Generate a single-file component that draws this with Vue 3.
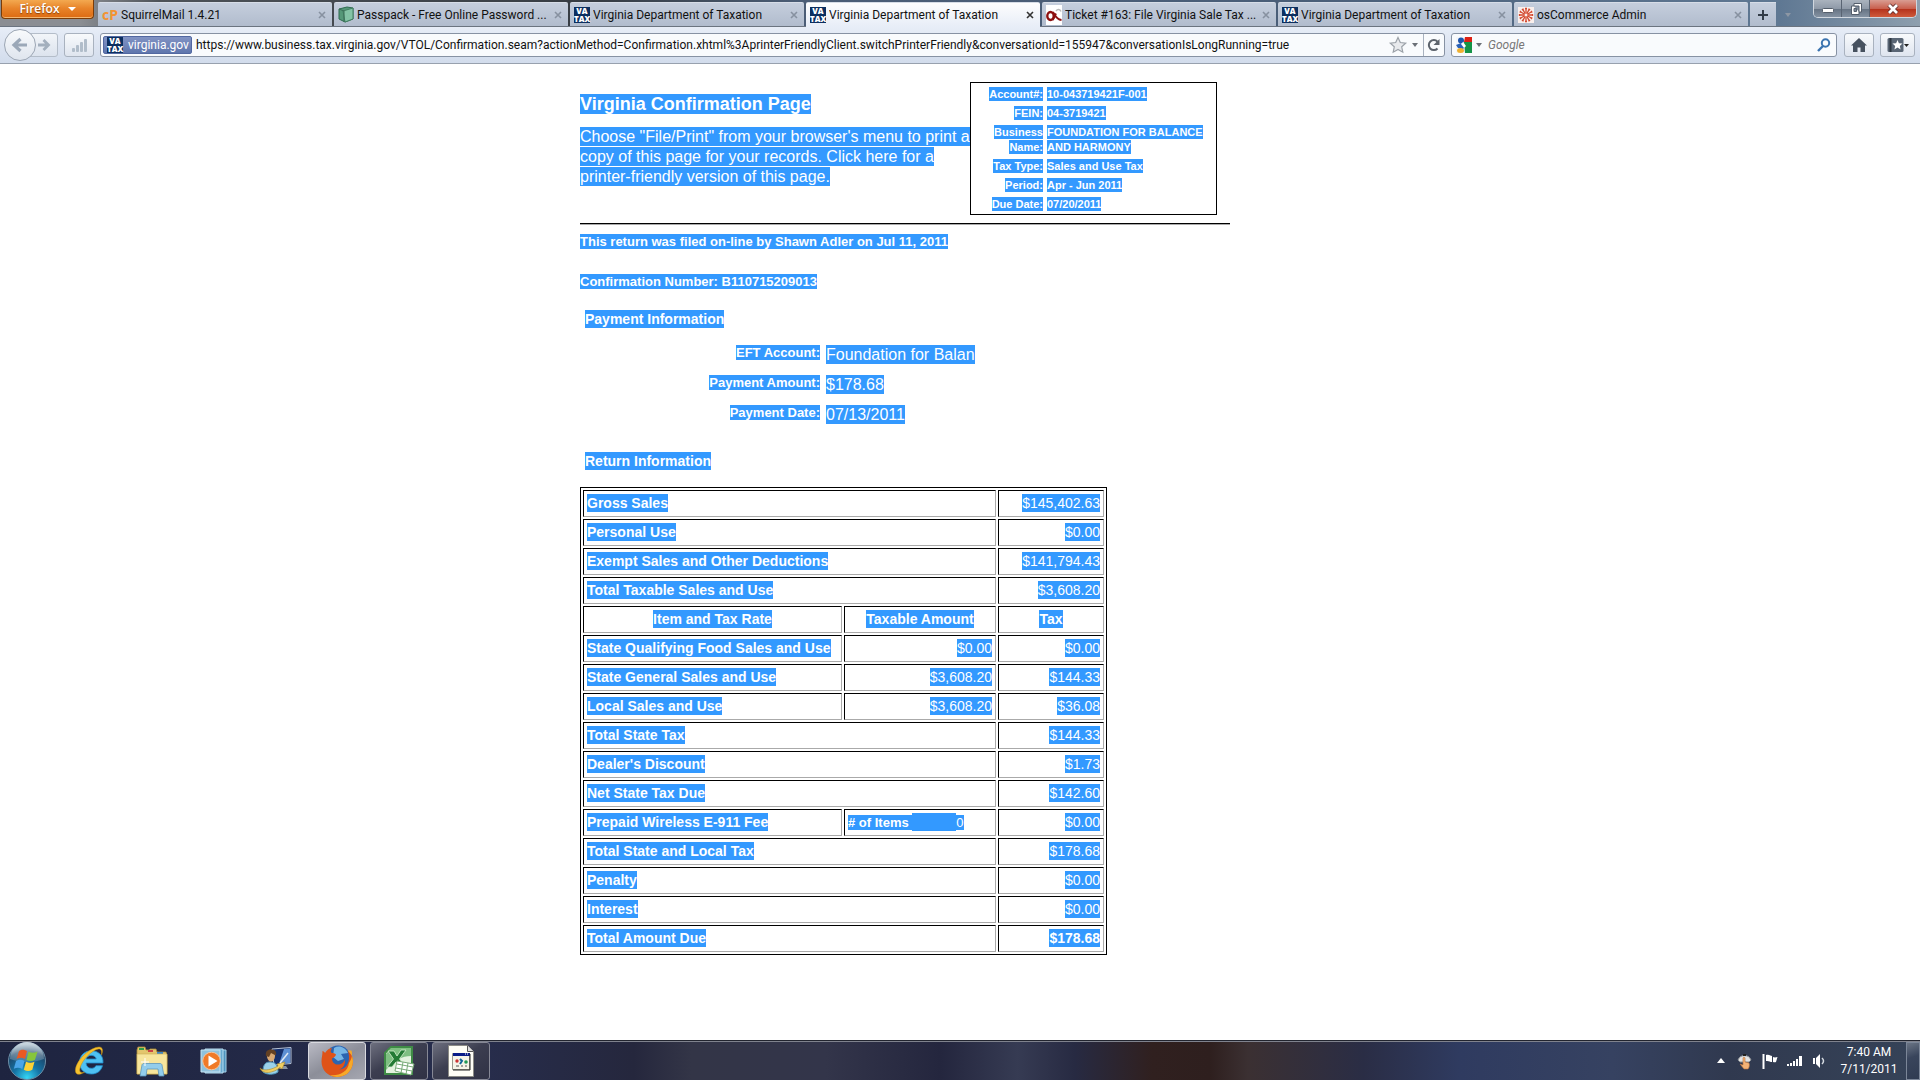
<script setup>
const tabs = [
  { title: 'SquirrelMail 1.4.21', icon: 'cp' },
  { title: 'Passpack - Free Online Password ...', icon: 'pack' },
  { title: 'Virginia Department of Taxation', icon: 'va' },
  { title: 'Virginia Department of Taxation', icon: 'va', active: true },
  { title: 'Ticket #163: File Virginia Sale Tax ...', icon: 'oc' },
  { title: 'Virginia Department of Taxation', icon: 'va' },
  { title: 'osCommerce Admin', icon: 'osc' }
]

const url =
  'https://www.business.tax.virginia.gov/VTOL/Confirmation.seam?actionMethod=Confirmation.xhtml%3AprinterFriendlyClient.switchPrinterFriendly&conversationId=155947&conversationIsLongRunning=true'

const account = [
  { label: ['Account#:'], value: ['10-043719421F-001'] },
  { label: ['FEIN:'], value: ['04-3719421'] },
  { label: ['Business', 'Name:'], value: ['FOUNDATION FOR BALANCE', 'AND HARMONY'] },
  { label: ['Tax Type:'], value: ['Sales and Use Tax'] },
  { label: ['Period:'], value: ['Apr - Jun 2011'] },
  { label: ['Due Date:'], value: ['07/20/2011'] }
]

const payment = [
  { label: 'EFT Account:', value: 'Foundation for Balan' },
  { label: 'Payment Amount:', value: '$178.68' },
  { label: 'Payment Date:', value: '07/13/2011' }
]

const rows = [
  { label: 'Gross Sales', tax: '$145,402.63' },
  { label: 'Personal Use', tax: '$0.00' },
  { label: 'Exempt Sales and Other Deductions', tax: '$141,794.43' },
  { label: 'Total Taxable Sales and Use', tax: '$3,608.20' },
  { label: 'Item and Tax Rate', amount: 'Taxable Amount', tax: 'Tax', head: true },
  { label: 'State Qualifying Food Sales and Use', amount: '$0.00', tax: '$0.00' },
  { label: 'State General Sales and Use', amount: '$3,608.20', tax: '$144.33' },
  { label: 'Local Sales and Use', amount: '$3,608.20', tax: '$36.08' },
  { label: 'Total State Tax', tax: '$144.33' },
  { label: "Dealer's Discount", tax: '$1.73' },
  { label: 'Net State Tax Due', tax: '$142.60' },
  { label: 'Prepaid Wireless E-911 Fee', items: '0', tax: '$0.00' },
  { label: 'Total State and Local Tax', tax: '$178.68' },
  { label: 'Penalty', tax: '$0.00' },
  { label: 'Interest', tax: '$0.00' },
  { label: 'Total Amount Due', tax: '$178.68', strong: true }
]

const rays = Array.from({ length: 12 }, (_, i) => i * 30)
</script>

<template>
  <div class="screen">
    <header class="chrome">
      <div class="tabbar">
        <button class="firefox">Firefox<i class="caret light"></i></button>
        <nav class="tabs">
          <div v-for="(tab, i) in tabs" :key="i" class="tab" :class="{ active: tab.active }">
            <span v-if="tab.icon === 'va'" class="va">VA<br />TAX</span>
            <span v-else-if="tab.icon === 'cp'" class="cp">cP</span>
            <svg v-else-if="tab.icon === 'oc'" width="16" height="20" viewBox="0 0 16 20">
              <rect width="16" height="20" fill="#fff" />
              <ellipse cx="4.500" cy="11" rx="3.200" ry="4" fill="none" stroke="#8d1010" stroke-width="2.400" />
              <path d="M7 7c2 3 3 7.500 8.500 8M10 8.500C8.500 11 8 13.500 6.500 15" fill="none" stroke="#8d1010" stroke-width="2" />
              <path d="M10 6c1.500-2 4-2 5 .5" fill="none" stroke="#bbb" stroke-width="1.500" />
            </svg>
            <svg v-else-if="tab.icon === 'pack'" width="16" height="17" viewBox="0 0 16 17">
              <path d="M1 3l8-2 6 1v11l-8 3-6-3z" fill="#559878" stroke="#2f6b50" />
              <path d="M5 5l10-3v11l-8 3z" fill="#83c3a5" stroke="#437f62" />
              <path d="M1 3l5 2v11" fill="none" stroke="#3b6f58" />
            </svg>
            <svg v-else width="16" height="16" viewBox="0 0 16 16">
              <rect width="16" height="16" fill="#f9efec" />
              <g v-for="r in rays" :key="r" :transform="`rotate(${r} 8 8)`">
                <path d="M8 6.500V1M7 1.500h2" stroke="#d4492f" stroke-width="1.300" />
              </g>
            </svg>
            <span class="tab-title">{{ tab.title }}</span>
            <button class="close" aria-label="Close tab">
              <svg width="8" height="8" viewBox="0 0 8 8"><path d="M1 1l6 6M7 1L1 7" stroke="currentColor" stroke-width="1.600" /></svg>
            </button>
          </div>
          <button class="newtab" aria-label="New tab">
            <svg width="12" height="12" viewBox="0 0 12 12"><path d="M6 1v10M1 6h10" stroke="#333c48" stroke-width="2" /></svg>
          </button>
          <i class="caret faint"></i>
        </nav>
        <div class="winbtns">
          <button aria-label="Minimize"><svg width="14" height="12" viewBox="0 0 14 12"><rect x="1.500" y="5.500" width="11" height="4" rx="1" fill="#fff" stroke="#545e6b" /></svg></button>
          <button aria-label="Restore">
            <svg width="14" height="14" viewBox="0 0 14 14"><path d="M5 1.500h7.500V10H10v2.500H2.500V4H5z" fill="#fff" stroke="#545e6b" /><path d="M5 4h5v6M5 6.500h2.500v3H5z" fill="#7d8998" stroke="#545e6b" /></svg>
          </button>
          <button class="x" aria-label="Close">
            <svg width="14" height="12" viewBox="0 0 14 12"><path d="M3 2l8 8M11 2l-8 8" stroke="#5d2c2c" stroke-width="4.500" /><path d="M3 2l8 8M11 2l-8 8" stroke="#fff" stroke-width="2.800" /></svg>
          </button>
        </div>
      </div>

      <div class="navbar">
        <div class="history">
          <button class="back" aria-label="Back">
            <svg width="18" height="16" viewBox="0 0 18 16"><path d="M16 8H4M9.500 2L3 8l6.500 6" fill="none" stroke="#9ba8b8" stroke-width="3.200" /></svg>
          </button>
          <button class="forward" aria-label="Forward">
            <svg width="14" height="14" viewBox="0 0 14 14"><path d="M1 7h10M6.500 2l5 5-5 5" fill="none" stroke="#a3afbd" stroke-width="2.800" /></svg>
          </button>
        </div>
        <button class="tool stats" aria-label="Statistics">
          <svg width="16" height="16" viewBox="0 0 16 16" fill="#b1bdca"><rect x="1" y="11" width="3" height="4" rx="1" /><rect x="5" y="8" width="3" height="7" rx="1" /><rect x="9" y="5" width="3" height="10" rx="1" /><rect x="13" y="2" width="3" height="13" rx="1" /></svg>
        </button>
        <div class="urlbar">
          <span class="identity"><span class="va">VA<br />TAX</span>virginia.gov</span>
          <input class="url" type="text" :value="url" aria-label="Address" />
          <svg class="star" width="20" height="18" viewBox="0 0 20 18"><path d="M10 1.500l2.300 5 5.400.6-4 3.700 1.100 5.400-4.800-2.700-4.800 2.700 1.100-5.400-4-3.700 5.400-.6z" fill="#e8eaed" stroke="#9ba1a8" stroke-width="1.200" /></svg>
          <i class="caret gray"></i>
          <button class="reload" aria-label="Reload">
            <svg width="14" height="14" viewBox="0 0 14 14"><path d="M10.500 10.500A5 5 0 1 1 10.500 3.700" fill="none" stroke="#5c636c" stroke-width="2" /><path d="M12.500 1v6h-6z" fill="#5c636c" /></svg>
          </button>
        </div>
        <div class="search">
          <svg width="16" height="16" viewBox="0 0 16 16"><rect width="16" height="16" fill="#f4f6fa" /><path d="M9 0h7v5H8z" fill="#dd2013" /><path d="M8 5h8v11H9z" fill="#159447" /><circle cx="5" cy="3.500" r="3" fill="#1f56ab" /><path d="M0 8l5-2 4 4-2 2-5-1z" fill="#2a62b8" /><path d="M7 5l3 4-2 2-3-4z" fill="#fff" /><ellipse cx="4.500" cy="13.500" rx="3.500" ry="2.500" fill="#efb02e" /></svg>
          <i class="caret gray"></i>
          <input type="text" placeholder="Google" aria-label="Search" />
          <svg width="14" height="14" viewBox="0 0 14 14"><circle cx="8.500" cy="5" r="3.700" fill="none" stroke="#3b74b0" stroke-width="2" /><path d="M6 8l-5 5" stroke="#3b74b0" stroke-width="2.400" /></svg>
        </div>
        <button class="tool home" aria-label="Home">
          <svg width="16" height="14" viewBox="0 0 16 14"><path d="M8 0l8 7.500h-2V14H9.500V9.500h-3V14H2V7.500H0z" fill="#46515f" /></svg>
        </button>
        <button class="tool marks" aria-label="Bookmarks">
          <svg width="22" height="16" viewBox="0 0 22 16"><rect x=".5" y="1" width="16" height="14" rx="1.500" fill="#5a6675" /><path d="M3.500 1v14" stroke="#2d3641" stroke-width="2" /><path d="M10.500 3l1.400 3.300 3.600.3-2.700 2.300.8 3.600-3.100-1.900-3.100 1.900.8-3.600L5.500 6.600l3.600-.3z" fill="#fff" /><path d="M17 7h5l-2.500 3z" fill="#222" /></svg>
        </button>
      </div>
    </header>

    <main class="page">
      <div class="sheet">
        <section class="top">
          <div class="intro">
            <h1><span class="sel s20">Virginia Confirmation Page</span></h1>
            <p>
              <span class="sel s19">Choose "File/Print" from your browser's menu to print a</span>
              <span class="sel s19">copy of this page for your records. Click here for a</span>
              <span class="sel s19">printer-friendly version of this page.</span>
            </p>
          </div>
          <dl class="account">
            <template v-for="a in account" :key="a.label[0]">
              <dt><span v-for="t in a.label" :key="t" class="sel s14">{{ t }}</span></dt>
              <dd><span v-for="t in a.value" :key="t" class="sel s14">{{ t }}</span></dd>
            </template>
          </dl>
        </section>
        <hr />
        <p class="note"><span class="sel s15">This return was filed on-line by Shawn Adler on Jul 11, 2011</span></p>
        <p class="note"><span class="sel s15">Confirmation Number: B110715209013</span></p>

        <h2><span class="sel s18">Payment Information</span></h2>
        <dl class="payment">
          <template v-for="p in payment" :key="p.label">
            <dt><span class="sel s15">{{ p.label }}</span></dt>
            <dd><span class="sel s19">{{ p.value }}</span></dd>
          </template>
        </dl>

        <h2 class="second"><span class="sel s18">Return Information</span></h2>
        <table class="return">
          <colgroup><col class="c1" /><col class="c2" /><col class="c3" /></colgroup>
          <tbody>
            <tr v-for="r in rows" :key="r.label" :class="{ head: r.head, strong: r.strong }">
              <th :colspan="r.amount || r.items ? 1 : 2"><span class="sel s18">{{ r.label }}</span></th>
              <td v-if="r.amount"><span class="sel s18">{{ r.amount }}</span></td>
              <td v-if="r.items" class="items"><div><b class="sel s15"># of Items&nbsp;</b><span class="sel blank"></span><span class="sel s15">{{ r.items }}</span></div></td>
              <td><span class="sel s18">{{ r.tax }}</span></td>
            </tr>
          </tbody>
        </table>
      </div>
    </main>

    <footer class="taskbar">
      <button class="orb" aria-label="Start">
        <svg width="40" height="40" viewBox="0 0 40 40">
          <defs>
            <radialGradient id="orb" cx=".5" cy=".95" r=".9"><stop offset="0" stop-color="#35d6f5" /><stop offset=".4" stop-color="#1574a6" /><stop offset=".8" stop-color="#1c4568" /><stop offset="1" stop-color="#6f93ab" /></radialGradient>
            <linearGradient id="gloss" x2="0" y2="1"><stop offset="0" stop-color="#fff" stop-opacity=".65" /><stop offset="1" stop-color="#fff" stop-opacity=".15" /></linearGradient>
          </defs>
          <circle cx="20" cy="20" r="18.500" fill="url(#orb)" stroke="#6d8ea6" />
          <path d="M3 18a17 17 0 0 1 34 0c-10 4-24 4-34 0z" fill="url(#gloss)" />
          <path d="M12 10c3-2 5-1.500 8 0l-2 8c-3-1.600-5.500-1.600-8.500 0z" fill="#ea5a23" />
          <path d="M21.500 10.700c3 1.500 6 1.500 9-.3l-2.500 8.400c-3 1.700-5.500 1.700-8.500.2z" fill="#86c53c" />
          <path d="M9 20c3-1.600 5.500-1.600 8.500 0l-2.200 8c-3-1.700-5.500-1.700-8.500-.2z" fill="#4aa5e8" />
          <path d="M19 20.700c3 1.500 5.500 1.500 8.500 0l-2.200 8c-3 1.600-5.500 1.600-8.500 0z" fill="#fdd236" />
        </svg>
      </button>
      <button class="pin" aria-label="Internet Explorer">
        <svg width="32" height="32" viewBox="0 0 32 32">
          <path d="M29 18H12c.3 3.500 2.500 5.300 5.400 5.300 2.200 0 3.700-1 4.500-2.600h6.600C27 26 23 29 17.300 29 10.500 29 5.500 24.300 5.500 17.500S10.500 5.800 17.200 5.800C24.500 5.800 29.600 10.500 29 18zm-6.800-4c-.5-2.400-2.300-3.600-4.900-3.600-2.700 0-4.500 1.300-5.100 3.600z" fill="#4fc1f2" stroke="#1f8ccb" stroke-width=".8" />
          <path d="M27.500 10c2-5 1-8-2.500-8C17 2 3 14 1.500 24c-.8 6 3.500 6.500 9 3.200-4 1.300-5.500-.2-4.500-4.200C8 15 18 5 24.500 4c2.800-.3 3.400 2 3 6z" fill="#f5c22f" stroke="#c68f12" stroke-width=".5" />
        </svg>
      </button>
      <button class="pin" aria-label="Windows Explorer">
        <svg width="34" height="32" viewBox="0 0 34 32">
          <path d="M2 5l1-3h7l1 3h3l1-1h6l1 3h9l1 3v19H2z" fill="#e3c66d" stroke="#a98b39" stroke-width=".8" />
          <path d="M4 3h5v2H4z" fill="#2f9d45" /><path d="M13 5h5v2h-5z" fill="#c44" /><path d="M22 7h6v2h-6z" fill="#3d86c6" />
          <path d="M2 9h30v20H2z" fill="#f7e59c" stroke="#c9ab55" stroke-width=".6" />
          <path d="M5 31l2-11c.2-1 1-1.500 2-1.500h16c1 0 1.800.5 2 1.500l2 11h-5l-1-7H12l-1 7z" fill="#93cdec" stroke="#5e97bd" stroke-width=".8" />
          <path d="M10 13v8M6 17h8" stroke="#fff" />
        </svg>
      </button>
      <button class="pin" aria-label="Windows Media Player">
        <svg width="28" height="28" viewBox="0 0 28 28">
          <path d="M8 3h18v22H8z" fill="#4e93bd" stroke="#a4d0e8" /><path d="M5 2h18v24H5z" fill="#67a9cf" stroke="#b8ddf0" /><path d="M1 3h19v22H1z" fill="#8fc2dd" stroke="#c6e3f1" />
          <circle cx="11.500" cy="14" r="8.800" fill="#f07a28" stroke="#f7c59d" /><path d="M8.500 8.500v11l9-5.500z" fill="#fff" />
        </svg>
      </button>
      <button class="pin" aria-label="Remote assistance">
        <svg width="34" height="30" viewBox="0 0 34 30">
          <path d="M13 3l19-1.500v16L15 19z" fill="#16306c" stroke="#b7c3d5" /><path d="M25 3l6-.5v14.500l-11 1z" fill="#5d8fd3" /><path d="M22 20h5l2 3h-9z" fill="#8994a5" />
          <path d="M4 26c0-7 2-10 7-10s8 3 8 10c-4 3-11 3-15 0z" fill="#9bd2ea" stroke="#4e96bb" /><ellipse cx="12" cy="10" rx="4" ry="5.500" fill="#d8a873" /><path d="M7 10c-1-5 2-7 6-6.500 4 .5 4.500 3 4 6l-5-2.500-2 4z" fill="#624023" />
          <path d="M1 22c4 4 13 1 18-2l-1-2 8-2-3 7-2-1.500C15 27 3 29 1 22z" fill="#f0cf63" stroke="#aa8728" stroke-width=".6" /><path d="M21 17l8-10" stroke="#dfe8f3" stroke-width="1.500" />
        </svg>
      </button>
      <button class="task current" aria-label="Firefox window">
        <svg width="34" height="34" viewBox="0 0 34 34">
          <circle cx="18" cy="14" r="12.500" fill="#2c64b0" /><path d="M14 4c5-3 11-1 14 5l-7 1 3 5-6 2-5-4z" fill="#76b5e5" />
          <path d="M2.500 7c1 .2 2 1 2.500 2 2-3 4-4.500 7-5-1 1.500-1.500 3-1 4.500 2 .5 4 1 5 2-.3 2-2.500 3-4 4 0 4 3 6.500 7 6 3-.4 5-2.500 6-5 .5 5-2 9-6 10 6 0 10-5 10-12 0-3-.5-5-1.500-7C32 10 34 15 32.500 21 31 28 25 33 17 33 8 33 1.500 26 1.500 17.500c0-4 1-6 1-10.500z" fill="#df5318" />
          <path d="M27.500 6.500C32 10 34 15 32.500 21 31 28 25 33 17 33c-2 0-5-.7-7-2 9 1 18-3 19-12 2-3 4-7 2.500-12.500z" fill="#f7a928" />
        </svg>
      </button>
      <button class="task" aria-label="Excel window">
        <svg width="32" height="30" viewBox="0 0 32 30">
          <path d="M8 1h21v27H2V7z" fill="#e4f2df" stroke="#3f8b46" stroke-width="2" /><path d="M8 2h20v8c-9 0-16 4-25 14V8z" fill="#7fbf82" />
          <path d="M5 5h6l3 5 4-6h5l-6.500 9L23 21h-6l-4-5-4 5H4l6.500-8z" fill="#247a35" stroke="#d5edcf" stroke-width=".8" />
          <path d="M14 15l17 3-3 11-16-4z" fill="#fff" stroke="#79ab79" /><path d="M14 18l16 3M13 22l16 3M20 16l-2 11M25 17l-2 11" stroke="#79ab79" />
        </svg>
      </button>
      <button class="task" aria-label="Document window">
        <svg width="26" height="32" viewBox="0 0 26 32">
          <path d="M.5.500h19l6 6v25H.5z" fill="#fffef6" stroke="#8c8c86" /><path d="M19.500.500v6h6" fill="#ddd" stroke="#555" />
          <path d="M4.500 8.500h17v16h-17z" fill="#f6f4e8" stroke="#9a9a8e" /><path d="M5 8h17v3H5z" fill="#0a1d88" /><path d="M17 9h1m1 0h1" stroke="#fff" />
          <path d="M22 9v16H5" fill="none" stroke="#222" /><circle cx="9" cy="16" r="1.700" fill="#c33" /><path d="M12 14l2 2-2 3" stroke="#169" stroke-width="2" fill="none" /><circle cx="18" cy="17" r="1.800" fill="#295" /><path d="M8 21h3m2 0h2m2 0h2" stroke="#555" />
        </svg>
      </button>
      <div class="tray">
        <svg width="8" height="5" viewBox="0 0 8 5"><path d="M0 5l4-5 4 5z" fill="#fff" /></svg>
        <svg width="16" height="18" viewBox="0 0 16 18"><path d="M1 8a7 7 0 0 1 13 0l-2 2H3z" fill="#e2e3e4" stroke="#8c9094" /><path d="M6 3h3" stroke="#222" stroke-width="2" /><path d="M6 6c0-1 2-1 2 0v4l4 1c1 2 0 5-1 6H7l-4-5 3 1z" fill="#f4b276" stroke="#b8703a" stroke-width=".6" /></svg>
        <svg width="16" height="16" viewBox="0 0 16 16"><path d="M1.500 1v15" stroke="#fff" stroke-width="2" /><path d="M4 2c3-1 5 1 6 1v6c-2 0-3-1.500-6-1zM11 4c1 .6 3 .5 4.500 0L14 9c-1 .4-2 .2-3 0z" fill="#fff" /></svg>
        <svg width="16" height="12" viewBox="0 0 16 12" fill="#fff"><rect y="9" width="2" height="2" /><rect x="3" y="8" width="2" height="3" /><rect x="6" y="6" width="2" height="5" /><rect x="9" y="4" width="2" height="7" /><rect x="12" y="1" width="3" height="10" /></svg>
        <svg width="14" height="14" viewBox="0 0 14 14"><path d="M1 4h2v6H1zM4 4l4-4v14l-4-4z" fill="#fff" /><path d="M10 4c2 2 2 4 0 6" stroke="#d5dae1" fill="none" stroke-width="1.500" /></svg>
      </div>
      <div class="clock"><span>7:40 AM</span><span>7/11/2011</span></div>
      <button class="desktop" aria-label="Show desktop"></button>
    </footer>
  </div>
</template>

<style>
body {
  margin: 0;
  background: #fff;
}
</style>

<style scoped>
* {
  box-sizing: border-box;
}
.screen {
  min-height: 100vh;
  display: flex;
  flex-direction: column;
  font-family: Roboto, "Noto Sans", sans-serif;
  font-size: 12px;
  color: #111;
}
button {
  display: flex;
  align-items: center;
  justify-content: center;
  padding: 0;
  border: 0;
  background: none;
  font: inherit;
  color: inherit;
}
svg {
  display: block;
  flex: none;
}
input {
  min-width: 0;
  padding: 0;
  border: 0;
  background: none;
  outline: 0;
  font: inherit;
  color: inherit;
}
.caret {
  flex: none;
  border: 4px solid transparent;
  border-top-color: currentColor;
  border-bottom: 0;
}
.caret.light { color: #fff; }
.caret.gray { color: #6b7077; border-left-width: 3px; border-right-width: 3px; }
.caret.faint { color: #8d97a4; border-left-width: 3px; border-right-width: 3px; margin: 11px 0 0 7px; }

/* tab strip */
.tabbar {
  display: flex;
  align-items: flex-start;
  height: 27px;
  background: linear-gradient(90deg, #8b8e93 0, #8b8e93 80px, #4d5258 160px, #363c43 600px, #4b5d76 800px, #4a5e78 1300px, #5f7893 1780px, #8e9fae 100%);
  border-bottom: 1px solid #6b7480;
}
.firefox {
  width: 93px;
  height: 19px;
  margin-left: 1px;
  gap: 8px;
  flex: none;
  color: #fff;
  font-family: "Open Sans", sans-serif;
  font-weight: 600;
  line-height: 16px;
  background: linear-gradient(#f3a950, #e8842a 45%, #dc6a12);
  border: 1px solid #7b3c07;
  border-top: 0;
  border-radius: 0 0 4px 4px;
  box-shadow: inset 0 -1px 0 #f4b670;
  text-shadow: 0 1px 1px #8a4209;
}
.tabs {
  display: flex;
  flex: 1;
  min-width: 0;
  gap: 2px;
  padding: 2px 0 0 4px;
}
.tab {
  display: flex;
  align-items: center;
  flex: 0 1 234px;
  min-width: 0;
  height: 24px;
  padding: 0 5px 0 4px;
  gap: 3px;
  background: linear-gradient(#c5cedd, #b1bccd);
  border-top: 1px solid #d7dde7;
  border-radius: 2px 2px 0 0;
}
.tab.active {
  height: 25px;
  background: linear-gradient(#fdfdfe, #e7edf7);
}
.tab-title {
  flex: 1;
  overflow: hidden;
  white-space: nowrap;
}
.close {
  width: 10px;
  height: 12px;
  flex: none;
  color: #8791a0;
}
.active .close { color: #333; }
.va {
  flex: none;
  width: 16px;
  height: 16px;
  background: #0c2f60;
  color: #fff;
  font-family: "Open Sans", sans-serif;
  font-size: 8px;
  font-weight: 800;
  line-height: 8px;
  text-align: center;
}
.cp {
  width: 16px;
  font: bold 14px/16px "Open Sans", sans-serif;
  color: #f29330;
}
.newtab {
  width: 26px;
  height: 24px;
  flex: none;
  background: linear-gradient(#c5cedd, #b1bccd);
  border-top: 1px solid #d7dde7;
}
.winbtns {
  display: flex;
  flex: none;
  width: 104px;
  height: 18px;
  margin-right: 3px;
  border: 1px solid #d0d7df;
  border-top: 0;
  border-radius: 0 0 5px 5px;
  overflow: hidden;
}
.winbtns button {
  width: 28px;
  border-right: 1px solid #596473;
  background: linear-gradient(#aab3be, #8f9aa8 50%, #657282 51%, #8492a2);
}
.winbtns .x {
  flex: 1;
  border-right: 0;
  background: linear-gradient(#d99d92, #c9604e 50%, #b3301a 51%, #cf5a3b);
}

/* navigation bar */
.navbar {
  display: flex;
  align-items: center;
  height: 37px;
  padding: 0 5px 0 4px;
  background: linear-gradient(#e7edf7, #d2dcec);
  border-bottom: 1px solid #98a1ae;
}
.history {
  display: flex;
  align-items: center;
  width: 54px;
  flex: none;
}
.back {
  position: relative;
  width: 32px;
  height: 32px;
  flex: none;
  border: 1px solid #9ca6b4;
  border-radius: 50%;
  background: linear-gradient(#f8fafc, #dfe5ee);
}
.forward {
  width: 28px;
  height: 24px;
  margin-left: -6px;
  border: 1px solid #b4bdc9;
  border-radius: 0 3px 3px 0;
  background: linear-gradient(#f2f5f9, #dce3ee);
}
.tool {
  height: 24px;
  flex: none;
  border: 1px solid #a9b2bf;
  border-radius: 3px;
  background: linear-gradient(#f8fafc, #dfe5ef);
}
.stats { width: 30px; margin: 0 6px; }
.home { width: 30px; margin: 0 6px 0 7px; }
.marks { width: 35px; }
.urlbar,
.search {
  display: flex;
  align-items: center;
  height: 24px;
  border: 1px solid #8792a3;
  border-radius: 3px;
  background: #f9fbfd;
}
.urlbar { flex: 1; min-width: 0; padding-left: 2px; }
.search { width: 386px; flex: 0 1 386px; margin-left: 6px; padding: 0 5px 0 4px; gap: 4px; }
.search input { flex: 1; margin-left: 2px; }
.search input::placeholder { color: #777; font-style: italic; opacity: 1; }
.identity {
  display: flex;
  align-items: center;
  gap: 5px;
  width: 89px;
  height: 18px;
  flex: none;
  padding-left: 3px;
  border: 1px solid #5268a1;
  border-radius: 2px;
  background: linear-gradient(#8193c4, #5f76ad);
  color: #fff;
  white-space: nowrap;
}
.url { flex: 1; margin-left: 4px; }
.star { margin-right: 4px; }
.reload {
  width: 21px;
  height: 22px;
  flex: none;
  margin-left: 5px;
  border-left: 1px solid #a9b2bf;
}

/* document */
.page {
  flex: 1;
  padding: 18px 20px;
  font-family: "Liberation Sans", Arial, sans-serif;
}
.sheet { max-width: 760px; margin: 0 auto; }
.sheet h1,
.sheet h2,
.sheet p,
.sheet dl,
.sheet dd { margin: 0; }
.sel {
  display: inline-block;
  vertical-align: top;
  background: #39f;
  color: #fff;
  white-space: nowrap;
}
.s14 { line-height: 14px; }
.s15 { line-height: 15px; }
.s18 { line-height: 18px; }
.s19 { line-height: 19px; }
.s20 { line-height: 20px; }
.top { display: flex; }
.intro { width: 390px; padding-top: 12px; }
.intro h1 { font-size: 18px; line-height: 20px; }
.intro p {
  display: flex;
  flex-direction: column;
  align-items: flex-start;
  gap: 1px;
  margin-top: 13px;
  font-size: 16px;
}
.account {
  display: grid;
  grid-template-columns: 72px 1fr;
  gap: 5px 4px;
  width: 247px;
  padding: 4px 0 3px;
  border: 1px solid #000;
  font-size: 11px;
  font-weight: bold;
}
.account dt,
.account dd { display: flex; flex-direction: column; gap: 1px; align-items: flex-start; }
.account dt { align-items: flex-end; }
hr {
  width: 650px;
  max-width: 100%;
  height: 2px;
  margin: 8px 0 9px;
  border: 0;
  border-top: 1px solid #000;
  background: #aaa;
}
.note { height: 40px; font-size: 13px; font-weight: bold; }
.sheet h2 {
  padding-left: 5px;
  margin-top: -4px;
  font-size: 14px;
  line-height: 18px;
}
.payment {
  display: grid;
  grid-template-columns: 240px 1fr;
  gap: 11px 6px;
  padding-top: 17px;
  font-size: 16px;
  line-height: 19px;
}
.payment dt { text-align: right; font-size: 13px; font-weight: bold; }
.payment dd { height: 19px; }
.sheet .second { margin: 28px 0 17px; }
.return {
  width: 527px;
  table-layout: fixed;
  border: 1px solid #000;
  border-collapse: separate;
  border-spacing: 2px;
  font-size: 14px;
  line-height: 18px;
}
.c1 { width: 259px; }
.c2 { width: 152px; }
.c3 { width: 106px; }
.return th,
.return td {
  height: 27px;
  padding: 3px 3px 4px;
  border: 1px solid #aaa;
  border-top-color: #000;
  border-left-color: #000;
  text-align: right;
  vertical-align: top;
}
.return th { text-align: left; }
.head th,
.head td { text-align: center; font-weight: bold; }
.head th { text-align: center; }
.strong td { font-weight: bold; }
.return .items { text-align: left; font-size: 13px; }
.items div { display: flex; align-items: center; }
.blank { width: 44px; height: 18px; }

/* taskbar */
.taskbar {
  display: flex;
  align-items: center;
  height: 40px;
  border-top: 1px solid #22252f;
  box-shadow: inset 0 1px 0 #7f828d;
  background: linear-gradient(90deg, #1e2440 0, #272d4c 25%, #25273d 33%, #333547 36%, #33354a 43%, #24263e 49%, #363b53 53%, #272a42 56%, #30201f 60%, #2e1f1e 63%, #3b3032 65%, #2a2d45 71%, #2f3b60 76%, #364261 84%, #30394f 90%, #364358 100%);
}
.orb { width: 40px; height: 39px; margin-left: 7px; margin-right: 12px; }
.pin { width: 62px; height: 39px; flex: none; }
.task {
  width: 58px;
  height: 38px;
  margin-right: 4px;
  flex: none;
  border: 1px solid #868895;
  border-radius: 3px;
  background: linear-gradient(150deg, #6d6f7e, #3c3e50 45%, #303245);
}
.task.current { border-color: #d9dae0; background: linear-gradient(150deg, #b9bac4, #8c8e99 50%, #a6a7b1); }
.pin + .task { margin-left: 1px; }
.tray {
  display: flex;
  align-items: center;
  gap: 9px;
  margin-left: auto;
}
.tray svg:first-child { margin-right: 3px; }
.clock {
  display: flex;
  flex-direction: column;
  align-items: center;
  width: 74px;
  margin-left: 6px;
  line-height: 17px;
  color: #fff;
}
.desktop {
  width: 14px;
  height: 38px;
  border: 1px solid #7b8698;
  background: linear-gradient(160deg, #6a7484, #39455c 40%, #303c52);
}
</style>
